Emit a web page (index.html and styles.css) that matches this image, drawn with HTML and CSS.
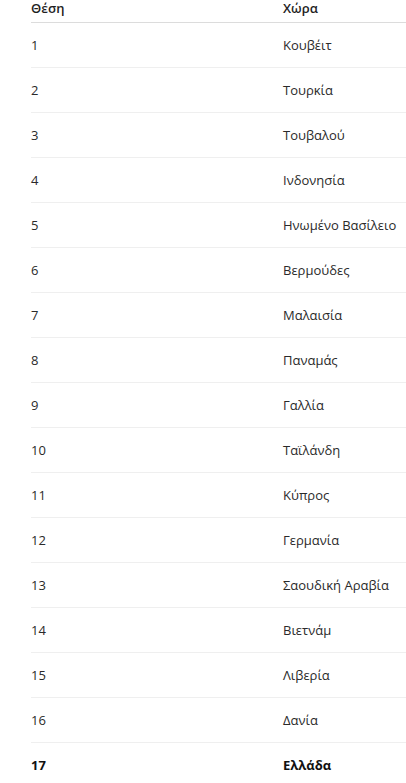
FILE: index.html
```html
<!DOCTYPE html>
<html lang="el">
<head>
<meta charset="utf-8">
<link rel="stylesheet" href="styles.css">
</head>
<body>
<div class="wrap">
<table class="rank">
<thead>
<tr><th class="c1">Θέση</th><th class="c2">Χώρα</th></tr>
</thead>
<tbody>
<tr><td>1</td><td>Κουβέιτ</td></tr>
<tr><td>2</td><td>Τουρκία</td></tr>
<tr><td>3</td><td>Τουβαλού</td></tr>
<tr><td>4</td><td>Ινδονησία</td></tr>
<tr><td>5</td><td>Ηνωμένο Βασίλειο</td></tr>
<tr><td>6</td><td>Βερμούδες</td></tr>
<tr><td>7</td><td>Μαλαισία</td></tr>
<tr><td>8</td><td>Παναμάς</td></tr>
<tr><td>9</td><td>Γαλλία</td></tr>
<tr><td>10</td><td>Ταϊλάνδη</td></tr>
<tr><td>11</td><td>Κύπρος</td></tr>
<tr><td>12</td><td>Γερμανία</td></tr>
<tr><td>13</td><td>Σαουδική Αραβία</td></tr>
<tr><td>14</td><td>Βιετνάμ</td></tr>
<tr><td>15</td><td>Λιβερία</td></tr>
<tr><td>16</td><td>Δανία</td></tr>
<tr class="hl"><td>17</td><td>Ελλάδα</td></tr>
</tbody>
</table>
</div>
</body>
</html>
```
FILE: styles.css
```css
html, body {
  margin: 0;
  padding: 0;
  background: #fff;
  overflow: hidden;
}
.wrap {
  padding-left: 31px;
}
.rank {
  border-collapse: collapse;
  width: 375px;
  font-family: "Open Sans", "Noto Sans", sans-serif;
  font-size: 13px;
  color: #222;
}
.rank th {
  text-align: left;
  font-weight: 600;
  line-height: 14px;
  padding: 1px 0 7px 0;
  border-bottom: 1px solid #dcdcdc;
  color: #1e1e1e;
}
.rank .c1 {
  width: 252px;
}
.rank td {
  height: 44px;
  padding: 0;
  line-height: 16px;
  vertical-align: middle;
  border-bottom: 1px solid #efefef;
  color: #2a2a2a;
  white-space: nowrap;
}
.rank tr.hl td {
  font-weight: 700;
  color: #111;
}
```
